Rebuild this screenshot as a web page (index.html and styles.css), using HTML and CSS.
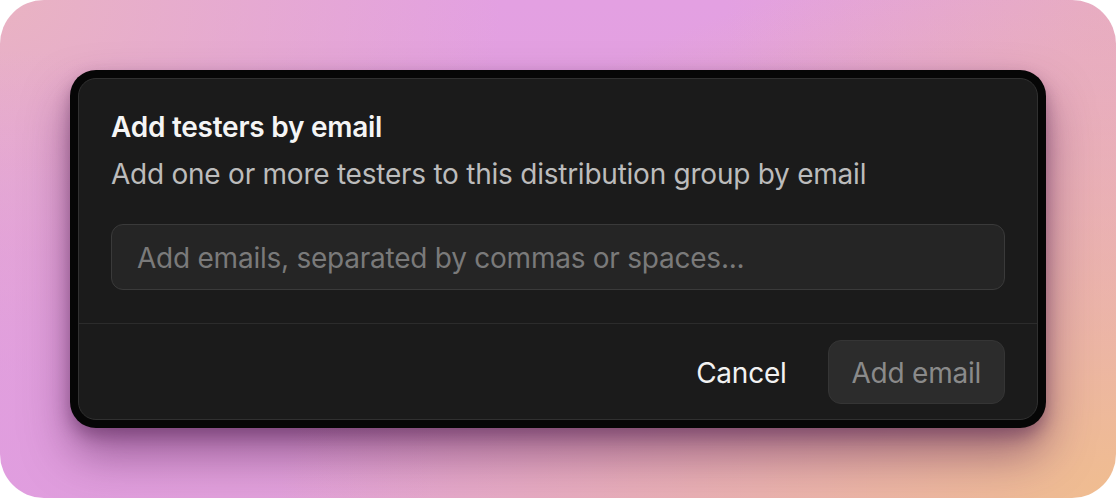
FILE: index.html
```html
<!DOCTYPE html>
<html>
<head>
<meta charset="utf-8">
<link rel="stylesheet" href="styles.css">
</head>
<body>
<div class="bg">
  <div class="frame">
    <div class="card">
      <div class="body">
        <h1 class="title">Add testers by email</h1>
        <p class="desc">Add one or more testers to this distribution group by email</p>
        <div class="input">Add emails, separated by commas or spaces...</div>
      </div>
      <div class="footer">
        <button class="btn ghost">Cancel</button>
        <button class="btn primary">Add email</button>
      </div>
    </div>
  </div>
</div>
</body>
</html>
```
FILE: styles.css
```css
* { box-sizing: border-box; }
html, body { margin: 0; padding: 0; background: #ffffff; }
body { width: 1116px; height: 498px; font-family: Inter, "Noto Sans", sans-serif; }
.bg {
  width: 1116px;
  height: 498px;
  border-radius: 44px;
  padding: 70px;
  background:
    radial-gradient(ellipse 75% 110% at 100% 100%, #f0bd8f 0%, rgba(240,189,143,0.6) 40%, rgba(240,189,143,0) 100%),
    radial-gradient(ellipse 40% 90% at 0% 100%, #e09ddf 0%, rgba(224,157,223,0) 100%),
    radial-gradient(ellipse 45% 80% at 0% 0%, #e9b3c2 0%, rgba(233,179,194,0) 100%),
    radial-gradient(ellipse 35% 70% at 100% 0%, #e7abc6 0%, rgba(231,171,198,0) 100%),
    linear-gradient(180deg, #e3a0e2 0%, #e2a3d8 100%);
}
.frame {
  width: 976px;
  height: 358px;
  background: #060606;
  border-radius: 26px;
  padding: 8px;
  box-shadow: 0 26px 46px rgba(80, 25, 80, 0.5), 0 8px 16px rgba(60, 20, 60, 0.35);
}
.card {
  width: 960px;
  height: 342px;
  background: #1b1b1b;
  border: 1px solid #303030;
  border-radius: 18px;
  display: flex;
  flex-direction: column;
}
.body {
  padding: 28px 32px 33px 32px;
  border-bottom: 1px solid #2c2c2c;
}
.title {
  margin: 0;
  font-size: 28px;
  line-height: 40px;
  font-weight: 600;
  color: #f5f5f5;
  letter-spacing: -0.25px;
}
.desc {
  margin: 7px 0 0 0;
  font-size: 28px;
  line-height: 40px;
  color: #bcbcbc;
  font-weight: 400;
  letter-spacing: -0.24px;
}
.input {
  margin-top: 30px;
  height: 66px;
  border-radius: 12px;
  background: #252525;
  border: 1px solid #3a3a3a;
  padding: 2px 25px 0 25px;
  display: flex;
  align-items: center;
  font-size: 28px;
  color: #7a7a7a;
  letter-spacing: -0.24px;
}
.footer {
  flex: 1;
  display: flex;
  justify-content: flex-end;
  align-items: center;
  gap: 17px;
  padding: 1px 32px 0 32px;
}
.btn {
  font-family: inherit;
  font-size: 28px;
  letter-spacing: -0.24px;
  height: 64px;
  padding: 2px 23px 0 23px;
  border-radius: 13px;
  border: 1px solid transparent;
  background: transparent;
}
.ghost { color: #f2f2f2; }
.primary {
  background: #2c2c2c;
  border-color: #353535;
  color: #8a8a8a;
}
```
